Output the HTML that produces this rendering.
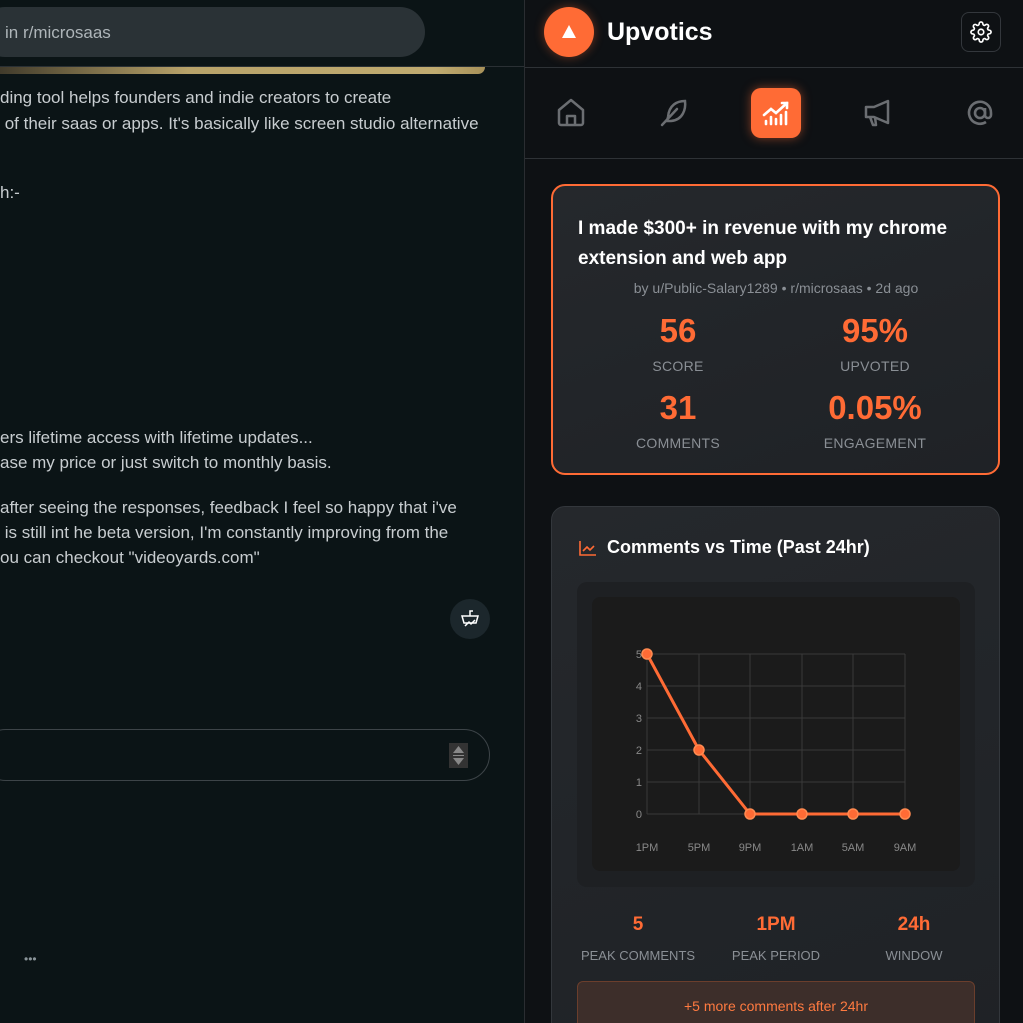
<!DOCTYPE html>
<html><head><meta charset="utf-8"><style>
*{box-sizing:border-box;margin:0;padding:0}
html,body{width:1023px;height:1023px;overflow:hidden}
body{background:#0b1416;font-family:"Liberation Sans",sans-serif;position:relative}
.left{position:absolute;left:0;top:0;width:524px;height:1023px;background:#0b1416;color:#d7dadc;font-size:17px;overflow:hidden}
.t{position:absolute;white-space:nowrap;color:#c8cdd0}
.right{position:absolute;left:524px;top:0;width:499px;height:1023px;background:#0e1114;border-left:1px solid #2a2d31;overflow:hidden}
.abs{position:absolute}
.card{position:absolute;left:26px;width:449px;border-radius:14px;background:linear-gradient(160deg,#25282c,#1f2226)}
.big{font-weight:bold;color:#ff6b35;font-size:33px;text-align:center;position:absolute;width:200px}
.lab{color:#8a8f95;font-size:14px;text-align:center;position:absolute;width:200px;letter-spacing:.3px}
</style></head><body>
<div class="left">
 <div class="abs" style="left:-20px;top:7px;width:445px;height:50px;border-radius:25px;background:#2a3236"></div>
 <div class="t" style="left:5px;top:23px;color:#aeb5b9">in r/microsaas</div>
 <div class="abs" style="left:0;top:66px;width:524px;height:1px;background:#2a3034"></div>
 <div class="abs" style="left:-10px;top:67px;width:495px;height:7px;border-radius:0 0 12px 12px;background:linear-gradient(90deg,#3a3528,#6b5f40 15%,#b8a36a 40%,#c0ab70 90%,#a8925a)"></div>
 <div class="t" style="left:0;top:88px">ding tool helps founders and indie creators to create</div>
 <div class="t" style="left:0;top:114px">&nbsp;of their saas or apps. It's basically like screen studio alternative</div>
 <div class="t" style="left:0;top:183px">h:-</div>
 <div class="t" style="left:0;top:428px">ers lifetime access with lifetime updates...</div>
 <div class="t" style="left:0;top:453px">ase my price or just switch to monthly basis.</div>
 <div class="t" style="left:0;top:498px">after seeing the responses, feedback I feel so happy that i've</div>
 <div class="t" style="left:0;top:523px">&nbsp;is still int he beta version, I'm constantly improving from the</div>
 <div class="t" style="left:0;top:548px">ou can checkout "videoyards.com"</div>
 <div class="abs" style="left:450px;top:599px;width:40px;height:40px;border-radius:50%;background:#1c272c"></div>
 <svg class="abs" style="left:459px;top:608px" width="22" height="22" viewBox="0 0 22 22" fill="none" stroke="#fff" stroke-width="1.5"><path d="M3 8h16l-2 7H5z"/><path d="M11 8V3h3"/><path d="M6 18l4-4 2 2 4-4"/></svg>
 <div class="abs" style="left:-20px;top:729px;width:510px;height:52px;border-radius:26px;border:1px solid #3d4448"></div>
 <div class="abs" style="left:449px;top:743px;width:19px;height:25px;background:#333"></div>
 <svg class="abs" style="left:449px;top:743px" width="19" height="25"><path d="M4 10L9.5 3 15 10z" fill="#888"/><path d="M4 15L9.5 22 15 15z" fill="#888"/><path d="M4 12.5h11" stroke="#888"/></svg>
 <div class="t" style="left:24px;top:952px;color:#8a9499;font-size:12px">•••</div>
</div>
<div class="right">
 <div class="abs" style="left:19px;top:7px;width:50px;height:50px;border-radius:50%;background:#ff6b35;box-shadow:0 0 10px rgba(255,107,53,.4)"></div>
 <svg class="abs" style="left:37px;top:25px" width="14" height="13"><path d="M7 0L14 13H0z" fill="#fff"/></svg>
 <div class="abs" style="left:82px;top:18px;color:#fff;font-weight:bold;font-size:25px">Upvotics</div>
 <div class="abs" style="left:436px;top:12px;width:40px;height:40px;border-radius:8px;border:1px solid #33373c"></div>
 <svg class="abs" style="left:445px;top:21px" width="22" height="22" viewBox="0 0 24 24" fill="none" stroke="#fff" stroke-width="1.8"><circle cx="12" cy="12" r="3"/><path d="M19.4 15a1.65 1.65 0 00.33 1.82l.06.06a2 2 0 11-2.83 2.83l-.06-.06a1.65 1.65 0 00-1.82-.33 1.65 1.65 0 00-1 1.51V21a2 2 0 11-4 0v-.09A1.650 1.650 0 009 19.4a1.65 1.65 0 00-1.82.33l-.06.06a2 2 0 11-2.830-2.83l.06-.06a1.65 1.65 0 00.33-1.82 1.65 1.65 0 00-1.51-1H3a2 2 0 110-4h.09A1.65 1.65 0 004.6 9a1.65 1.65 0 00-.33-1.82l-.06-.06a2 2 0 112.83-2.83l.06.06a1.65 1.65 0 001.82.33H9a1.65 1.65 0 001-1.51V3a2 2 0 114 0v.09a1.65 1.65 0 001 1.51 1.65 1.65 0 001.82-.33l.06-.06a2 2 0 112.83 2.83l-.06.06a1.65 1.65 0 00-.33 1.82V9a1.65 1.65 0 001.51 1H21a2 2 0 110 4h-.09a1.65 1.65 0 00-1.51 1z"/></svg>
 <div class="abs" style="left:0;top:67px;width:499px;height:1px;background:#2e3236"></div>
 <svg class="abs" style="left:32px;top:97px" width="28" height="30" viewBox="0 0 28 30" fill="none" stroke="#6b6e72" stroke-width="2.5" stroke-linejoin="round"><path d="M2 13L14 3l12 10v13a2 2 0 01-2 2H4a2 2 0 01-2-2z"/><path d="M10 28v-9h8v9"/></svg>
 <svg class="abs" style="left:134px;top:97px" width="30" height="30" viewBox="0 0 30 30" fill="none" stroke="#6b6e72" stroke-width="2.5" stroke-linecap="round"><path d="M26 4c-8 0-16 4-17 16l-1 4h4C24 23 27 12 26 4z"/><path d="M3 28L18 12"/></svg>
 <div class="abs" style="left:226px;top:88px;width:50px;height:50px;border-radius:10px;background:#ff6b35;box-shadow:0 0 10px rgba(255,107,53,.5)"></div>
 <svg class="abs" style="left:236px;top:98px" width="30" height="30" viewBox="0 0 30 30" fill="none" stroke="#fff" stroke-width="2.6" stroke-linecap="round"><path d="M3 17l7-6 5 4L26 5"/><path d="M21 5h5v5"/><path d="M5 26v-3M10 26v-7M15 26v-5M20 26v-9M25 26v-12"/></svg>
 <svg class="abs" style="left:339px;top:99px" width="30" height="28" viewBox="0 0 30 28" fill="none" stroke="#6b6e72" stroke-width="2.5" stroke-linejoin="round"><path d="M2 8h8L24 2v22l-14-6H2z"/><path d="M6 18l3 8h3l-1-8"/></svg>
 <svg class="abs" style="left:440px;top:98px" width="30" height="30" viewBox="0 0 30 30" fill="none" stroke="#6b6e72" stroke-width="2.6"><circle cx="15" cy="15" r="5"/><path d="M20 10v7a3 3 0 006 0v-2A11 11 0 1021 24"/></svg>
 <div class="abs" style="left:0;top:158px;width:499px;height:1px;background:#2e3236"></div>

 <div class="card" style="top:184px;height:291px;border:2px solid #ff6b35">
  <div class="abs" style="left:25px;top:28px;color:#fff;font-weight:bold;font-size:19px;line-height:30px;width:410px">I made $300+ in revenue with my chrome extension and web app</div>
  <div class="abs" style="left:0;top:94px;width:446px;text-align:center;color:#8a8f95;font-size:14px">by u/Public-Salary1289 • r/microsaas • 2d ago</div>
  <div class="big" style="left:25px;top:126px">56</div><div class="lab" style="left:25px;top:172px">SCORE</div>
  <div class="big" style="left:222px;top:126px">95%</div><div class="lab" style="left:222px;top:172px">UPVOTED</div>
  <div class="big" style="left:25px;top:203px">31</div><div class="lab" style="left:25px;top:249px">COMMENTS</div>
  <div class="big" style="left:222px;top:203px">0.05%</div><div class="lab" style="left:222px;top:249px">ENGAGEMENT</div>
 </div>

 <div class="card" style="top:506px;height:540px;border:1px solid #33373c">
  <svg class="abs" style="left:27px;top:33px" width="18" height="16" fill="none" stroke="#ff6b35" stroke-width="1.6"><path d="M1 1v14h16"/><path d="M4 11l4-4 3 3 4-4"/></svg>
  <div class="abs" style="left:55px;top:30px;color:#fff;font-weight:bold;font-size:18px">Comments vs Time (Past 24hr)</div>
  <div class="abs" style="left:25px;top:75px;width:398px;height:305px;border-radius:10px;background:#1e2023"></div>
  <div class="abs" style="left:40px;top:90px;width:368px;height:274px;border-radius:8px;background:#1b1b1b"></div>
 </div>
 <svg class="abs" style="left:0;top:0" width="499" height="1023">
  <g stroke="#3a3a3a" stroke-width="1">
   <path d="M122 654h258M122 686h258M122 718h258M122 750h258M122 782h258M122 814h258"/>
   <path d="M122 654v160M174 654v160M225 654v160M277 654v160M328 654v160M380 654v160"/>
  </g>
  <g fill="#888" font-size="11" font-family="Liberation Sans" text-anchor="end">
   <text x="117" y="658">5</text><text x="117" y="690">4</text><text x="117" y="722">3</text><text x="117" y="754">2</text><text x="117" y="786">1</text><text x="117" y="818">0</text>
  </g>
  <g fill="#888" font-size="11" font-family="Liberation Sans" text-anchor="middle">
   <text x="122" y="851">1PM</text><text x="174" y="851">5PM</text><text x="225" y="851">9PM</text><text x="277" y="851">1AM</text><text x="328" y="851">5AM</text><text x="380" y="851">9AM</text>
  </g>
  <path d="M122 654L174 750L225 814H380" fill="none" stroke="#ff6b35" stroke-width="3"/>
  <g fill="#ff6b35" stroke="#ff8a50" stroke-width="1.5"><circle cx="122" cy="654" r="5"/><circle cx="174" cy="750" r="5"/><circle cx="225" cy="814" r="5"/><circle cx="277" cy="814" r="5"/><circle cx="328" cy="814" r="5"/><circle cx="380" cy="814" r="5"/></g>
  <g font-family="Liberation Sans" text-anchor="middle">
   <text x="113" y="930" fill="#ff6b35" font-weight="bold" font-size="19">5</text>
   <text x="251" y="930" fill="#ff6b35" font-weight="bold" font-size="19">1PM</text>
   <text x="389" y="930" fill="#ff6b35" font-weight="bold" font-size="19">24h</text>
   <text x="113" y="960" fill="#8a8f95" font-size="13">PEAK COMMENTS</text>
   <text x="251" y="960" fill="#8a8f95" font-size="13">PEAK PERIOD</text>
   <text x="389" y="960" fill="#8a8f95" font-size="13">WINDOW</text>
  </g>
 </svg>
 <div class="abs" style="left:52px;top:981px;width:398px;height:60px;border-radius:6px;background:#3d2e2a;border:1px solid #6b3e2c"></div>
 <div class="abs" style="left:52px;top:998px;width:398px;text-align:center;color:#ff7a40;font-size:14px">+5 more comments after 24hr</div>
</div>
</body></html>
